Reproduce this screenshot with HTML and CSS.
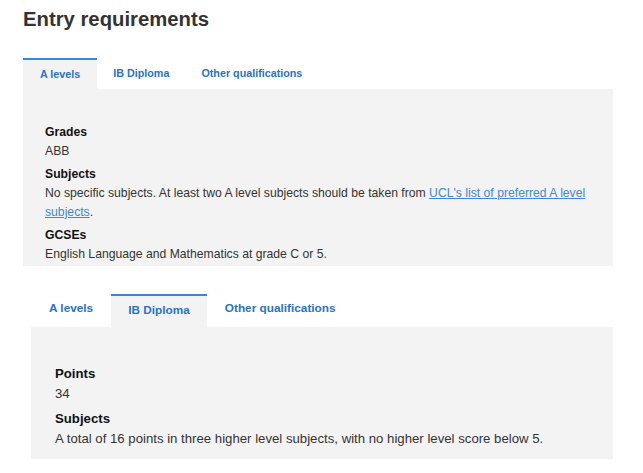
FILE: index.html
```html
<!DOCTYPE html>
<html lang="en">
<head>
  <meta charset="UTF-8" />
  <meta name="viewport" content="width=device-width, initial-scale=1.0" />
  <title>Entry requirements</title>
  <link rel="stylesheet" href="styles.css">
</head>
<body>
  <!-- Entry requirements: A levels tab selected -->
  <section class="entry">
    <h2>Entry requirements</h2>
    <ul class="tabs">
      <li class="tab active">A levels</li>
      <li class="tab">IB Diploma</li>
      <li class="tab">Other qualifications</li>
    </ul>
    <dl class="panel">
      <dt>Grades</dt>
      <dd>ABB</dd>
      <dt>Subjects</dt>
      <dd>No specific subjects. At least two A level subjects should be taken from <a href="#">UCL's list of preferred A level subjects</a>.</dd>
      <dt>GCSEs</dt>
      <dd>English Language and Mathematics at grade C or 5.</dd>
    </dl>
  </section>

  <!-- Same block, IB Diploma tab selected -->
  <section class="entry entry-lg">
    <ul class="tabs">
      <li class="tab">A levels</li>
      <li class="tab active">IB Diploma</li>
      <li class="tab">Other qualifications</li>
    </ul>
    <dl class="panel">
      <dt>Points</dt>
      <dd>34</dd>
      <dt>Subjects</dt>
      <dd>A total of 16 points in three higher level subjects, with no higher level score below 5.</dd>
    </dl>
  </section>
</body>
</html>
```

FILE: styles.css
```css
/* Root Variables */
:root {
  --text: #333;
  --tab-blue: #2a72c8;
  --border-blue: #3a86d8;
  --link: #3f89d6;
  --panel-bg: #f3f3f3;
  --font: "Liberation Sans", Arial, sans-serif;
}

* {
  margin: 0;
  padding: 0;
  box-sizing: border-box;
}
body {
  font-family: var(--font);
  color: var(--text);
  background: #fff;
  width: 643px;
  padding: 0 30px 0 23px;
}

/* Heading */
.entry h2 {
  font-size: 20.3px;
  line-height: 24px;
  font-weight: bold;
  padding-top: 7px;
  margin-bottom: 27px;
}

/* Tabs */
.tabs {
  list-style: none;
  display: flex;
  align-items: flex-end;
}
.tab {
  font-size: 10.75px;
  font-weight: bold;
  line-height: 14px;
  color: var(--tab-blue);
  padding: 6px 16px 9px;
}
.tab.active {
  background: var(--panel-bg);
  border-top: 2px solid var(--border-blue);
  padding: 7px 17px 8px;
}

/* Panel */
.panel {
  background: var(--panel-bg);
  font-size: 12.2px;
  line-height: 19px;
  padding: 33.5px 22px 2.5px;
}
.panel dt {
  font-weight: bold;
  color: #111;
}
.panel dd {
  margin-bottom: 4px;
}
.panel dd:last-child {
  margin-bottom: 0;
}
.panel a {
  color: var(--link);
  text-decoration: underline;
}

/* Second, slightly larger block */
.entry-lg {
  margin-top: 28px;
  margin-left: 8px;
}
.entry-lg .tab {
  font-size: 11.8px;
  line-height: 15px;
  padding: 0 18px 11px;
}
.entry-lg .tab.active {
  border-top-width: 2.5px;
  padding: 7px 17px 9px;
}
.entry-lg .panel {
  font-size: 13.2px;
  line-height: 20px;
  padding: 37px 24px 10px;
}
.entry-lg .panel dd {
  margin-bottom: 5px;
}
.entry-lg .panel dd:last-child {
  margin-bottom: 0;
}
```
